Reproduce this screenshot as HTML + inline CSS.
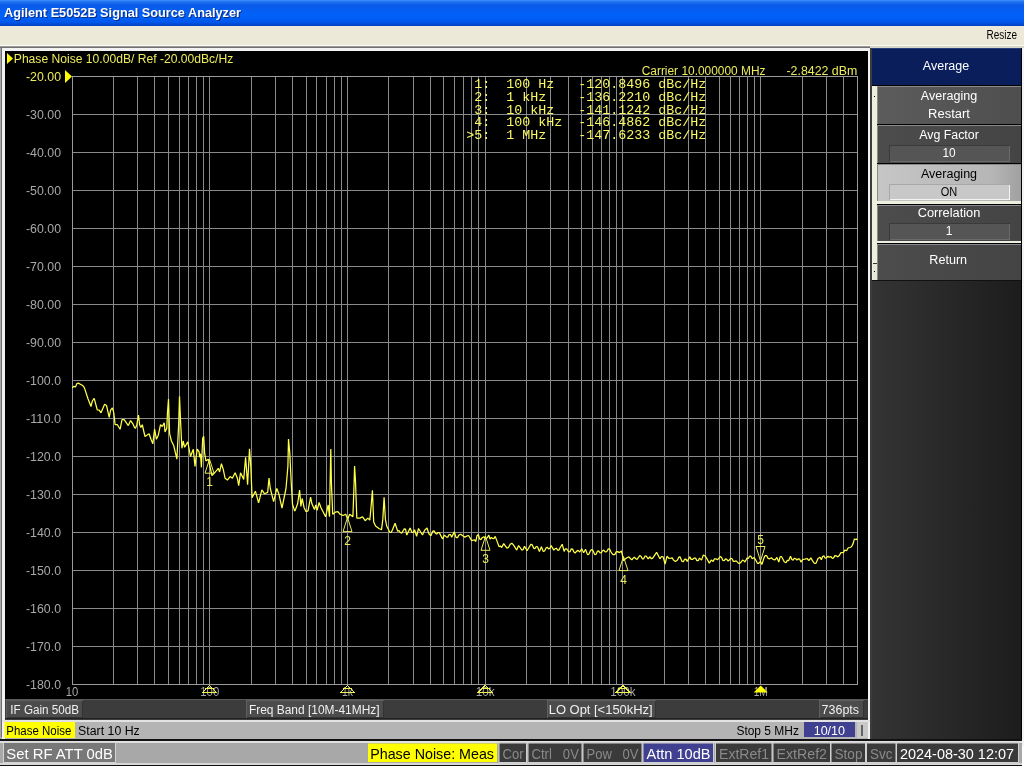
<!DOCTYPE html>
<html><head><meta charset="utf-8"><style>html,body{margin:0;padding:0;width:1024px;height:768px;overflow:hidden;background:#fff}</style></head><body>
<svg width="1024" height="768" viewBox="0 0 1024 768" style="position:absolute;left:0;top:0;will-change:transform"><defs><linearGradient id="tg" x1="0" y1="0" x2="0" y2="1"><stop offset="0" stop-color="#3d8ffa"/><stop offset="0.08" stop-color="#1f70f2"/><stop offset="0.2" stop-color="#0a5ae8"/><stop offset="0.6" stop-color="#0062fa"/><stop offset="0.85" stop-color="#0058ec"/><stop offset="1" stop-color="#0040c0"/></linearGradient><linearGradient id="pg" x1="0" y1="0" x2="1" y2="0"><stop offset="0" stop-color="#343434"/><stop offset="1" stop-color="#1c1c1c"/></linearGradient><linearGradient id="kg" x1="0" y1="0" x2="1" y2="0"><stop offset="0" stop-color="#5c5c5c"/><stop offset="1" stop-color="#4e4e4e"/></linearGradient><linearGradient id="kg2" x1="0" y1="0" x2="1" y2="0"><stop offset="0" stop-color="#4c4c4c"/><stop offset="1" stop-color="#444"/></linearGradient><linearGradient id="kl" x1="0" y1="0" x2="1" y2="0"><stop offset="0" stop-color="#c6c6c6"/><stop offset="0.8" stop-color="#b6b6b6"/><stop offset="1" stop-color="#a0a0a0"/></linearGradient></defs>
<rect x="0" y="0" width="1024" height="26" fill="url(#tg)" />
<text x="5" y="18" font-family="Liberation Sans" font-size="13" fill="#0a2a80" font-weight="bold" text-anchor="start" textLength="237" lengthAdjust="spacingAndGlyphs" >Agilent E5052B Signal Source Analyzer</text>
<text x="4" y="17" font-family="Liberation Sans" font-size="13" fill="#ffffff" font-weight="bold" text-anchor="start" textLength="237" lengthAdjust="spacingAndGlyphs" >Agilent E5052B Signal Source Analyzer</text>
<rect x="0" y="26" width="1024" height="19" fill="#ece9d8" />
<text x="986.5" y="39" font-family="Liberation Sans" font-size="12" fill="#000" font-weight="normal" text-anchor="start" textLength="30.5" lengthAdjust="spacingAndGlyphs" >Resize</text>
<rect x="0" y="45" width="1024" height="1" fill="#fbfaf2" />
<rect x="0" y="46" width="872" height="700" fill="#a8a8a8" />
<rect x="0" y="46" width="870" height="1" fill="#9a9a9a" />
<rect x="1" y="47" width="1" height="690" fill="#707070" />
<rect x="0" y="47" width="870" height="1" fill="#707070" />
<rect x="2" y="48" width="868" height="3" fill="#f2f2f2" />
<rect x="2" y="48" width="3" height="691" fill="#f2f2f2" />
<rect x="868" y="48" width="2" height="692" fill="#f2f2f2" />
<rect x="870" y="48" width="2" height="698" fill="#1a1a1a" />
<rect x="5" y="51" width="863" height="648" fill="#000" />
<rect x="72" y="76" width="786" height="1" fill="#8a8a8a" />
<rect x="72" y="114" width="786" height="1" fill="#8a8a8a" />
<rect x="72" y="152" width="786" height="1" fill="#8a8a8a" />
<rect x="72" y="190" width="786" height="1" fill="#8a8a8a" />
<rect x="72" y="228" width="786" height="1" fill="#8a8a8a" />
<rect x="72" y="266" width="786" height="1" fill="#8a8a8a" />
<rect x="72" y="304" width="786" height="1" fill="#8a8a8a" />
<rect x="72" y="342" width="786" height="1" fill="#8a8a8a" />
<rect x="72" y="380" width="786" height="1" fill="#8a8a8a" />
<rect x="72" y="418" width="786" height="1" fill="#8a8a8a" />
<rect x="72" y="456" width="786" height="1" fill="#8a8a8a" />
<rect x="72" y="494" width="786" height="1" fill="#8a8a8a" />
<rect x="72" y="532" width="786" height="1" fill="#8a8a8a" />
<rect x="72" y="570" width="786" height="1" fill="#8a8a8a" />
<rect x="72" y="608" width="786" height="1" fill="#8a8a8a" />
<rect x="72" y="646" width="786" height="1" fill="#8a8a8a" />
<rect x="72" y="684" width="786" height="1" fill="#8a8a8a" />
<rect x="72" y="76" width="1" height="609" fill="#8a8a8a" />
<rect x="113" y="76" width="1" height="609" fill="#8a8a8a" />
<rect x="137" y="76" width="1" height="609" fill="#8a8a8a" />
<rect x="154" y="76" width="1" height="609" fill="#8a8a8a" />
<rect x="168" y="76" width="1" height="609" fill="#8a8a8a" />
<rect x="179" y="76" width="1" height="609" fill="#8a8a8a" />
<rect x="188" y="76" width="1" height="609" fill="#8a8a8a" />
<rect x="196" y="76" width="1" height="609" fill="#8a8a8a" />
<rect x="203" y="76" width="1" height="609" fill="#8a8a8a" />
<rect x="209" y="76" width="1" height="609" fill="#8a8a8a" />
<rect x="251" y="76" width="1" height="609" fill="#8a8a8a" />
<rect x="275" y="76" width="1" height="609" fill="#8a8a8a" />
<rect x="292" y="76" width="1" height="609" fill="#8a8a8a" />
<rect x="306" y="76" width="1" height="609" fill="#8a8a8a" />
<rect x="316" y="76" width="1" height="609" fill="#8a8a8a" />
<rect x="326" y="76" width="1" height="609" fill="#8a8a8a" />
<rect x="334" y="76" width="1" height="609" fill="#8a8a8a" />
<rect x="341" y="76" width="1" height="609" fill="#8a8a8a" />
<rect x="347" y="76" width="1" height="609" fill="#8a8a8a" />
<rect x="388" y="76" width="1" height="609" fill="#8a8a8a" />
<rect x="413" y="76" width="1" height="609" fill="#8a8a8a" />
<rect x="430" y="76" width="1" height="609" fill="#8a8a8a" />
<rect x="443" y="76" width="1" height="609" fill="#8a8a8a" />
<rect x="454" y="76" width="1" height="609" fill="#8a8a8a" />
<rect x="463" y="76" width="1" height="609" fill="#8a8a8a" />
<rect x="471" y="76" width="1" height="609" fill="#8a8a8a" />
<rect x="478" y="76" width="1" height="609" fill="#8a8a8a" />
<rect x="485" y="76" width="1" height="609" fill="#8a8a8a" />
<rect x="526" y="76" width="1" height="609" fill="#8a8a8a" />
<rect x="550" y="76" width="1" height="609" fill="#8a8a8a" />
<rect x="568" y="76" width="1" height="609" fill="#8a8a8a" />
<rect x="581" y="76" width="1" height="609" fill="#8a8a8a" />
<rect x="592" y="76" width="1" height="609" fill="#8a8a8a" />
<rect x="601" y="76" width="1" height="609" fill="#8a8a8a" />
<rect x="609" y="76" width="1" height="609" fill="#8a8a8a" />
<rect x="616" y="76" width="1" height="609" fill="#8a8a8a" />
<rect x="622" y="76" width="1" height="609" fill="#8a8a8a" />
<rect x="664" y="76" width="1" height="609" fill="#8a8a8a" />
<rect x="688" y="76" width="1" height="609" fill="#8a8a8a" />
<rect x="705" y="76" width="1" height="609" fill="#8a8a8a" />
<rect x="719" y="76" width="1" height="609" fill="#8a8a8a" />
<rect x="730" y="76" width="1" height="609" fill="#8a8a8a" />
<rect x="739" y="76" width="1" height="609" fill="#8a8a8a" />
<rect x="747" y="76" width="1" height="609" fill="#8a8a8a" />
<rect x="754" y="76" width="1" height="609" fill="#8a8a8a" />
<rect x="760" y="76" width="1" height="609" fill="#8a8a8a" />
<rect x="802" y="76" width="1" height="609" fill="#8a8a8a" />
<rect x="826" y="76" width="1" height="609" fill="#8a8a8a" />
<rect x="843" y="76" width="1" height="609" fill="#8a8a8a" />
<rect x="857" y="76" width="1" height="609" fill="#8a8a8a" />
<rect x="72" y="76" width="786" height="1" fill="#9a9a9a" />
<rect x="72" y="684" width="786" height="1" fill="#9a9a9a" />
<rect x="72" y="76" width="1" height="609" fill="#9a9a9a" />
<rect x="857" y="76" width="1" height="609" fill="#9a9a9a" />
<path d="M7 53 L13 58.5 L7 64 Z" fill="#ffff00"/>
<text x="13.8" y="63" font-family="Liberation Sans" font-size="12" fill="#ecec5c" font-weight="normal" text-anchor="start" textLength="219.5" lengthAdjust="spacingAndGlyphs" >Phase Noise 10.00dB/ Ref -20.00dBc/Hz</text>
<path d="M65 70 L72 76.5 L65 83 Z" fill="#ffff00"/>
<text x="61" y="81" font-family="Liberation Sans" font-size="12" fill="#ecec5c" font-weight="normal" text-anchor="end" textLength="35" lengthAdjust="spacingAndGlyphs" >-20.00</text>
<text x="61" y="119" font-family="Liberation Sans" font-size="12" fill="#a8a8a8" font-weight="normal" text-anchor="end" textLength="35" lengthAdjust="spacingAndGlyphs" >-30.00</text>
<text x="61" y="157" font-family="Liberation Sans" font-size="12" fill="#a8a8a8" font-weight="normal" text-anchor="end" textLength="35" lengthAdjust="spacingAndGlyphs" >-40.00</text>
<text x="61" y="195" font-family="Liberation Sans" font-size="12" fill="#a8a8a8" font-weight="normal" text-anchor="end" textLength="35" lengthAdjust="spacingAndGlyphs" >-50.00</text>
<text x="61" y="233" font-family="Liberation Sans" font-size="12" fill="#a8a8a8" font-weight="normal" text-anchor="end" textLength="35" lengthAdjust="spacingAndGlyphs" >-60.00</text>
<text x="61" y="271" font-family="Liberation Sans" font-size="12" fill="#a8a8a8" font-weight="normal" text-anchor="end" textLength="35" lengthAdjust="spacingAndGlyphs" >-70.00</text>
<text x="61" y="309" font-family="Liberation Sans" font-size="12" fill="#a8a8a8" font-weight="normal" text-anchor="end" textLength="35" lengthAdjust="spacingAndGlyphs" >-80.00</text>
<text x="61" y="347" font-family="Liberation Sans" font-size="12" fill="#a8a8a8" font-weight="normal" text-anchor="end" textLength="35" lengthAdjust="spacingAndGlyphs" >-90.00</text>
<text x="61" y="385" font-family="Liberation Sans" font-size="12" fill="#a8a8a8" font-weight="normal" text-anchor="end" textLength="35" lengthAdjust="spacingAndGlyphs" >-100.0</text>
<text x="61" y="423" font-family="Liberation Sans" font-size="12" fill="#a8a8a8" font-weight="normal" text-anchor="end" textLength="35" lengthAdjust="spacingAndGlyphs" >-110.0</text>
<text x="61" y="461" font-family="Liberation Sans" font-size="12" fill="#a8a8a8" font-weight="normal" text-anchor="end" textLength="35" lengthAdjust="spacingAndGlyphs" >-120.0</text>
<text x="61" y="499" font-family="Liberation Sans" font-size="12" fill="#a8a8a8" font-weight="normal" text-anchor="end" textLength="35" lengthAdjust="spacingAndGlyphs" >-130.0</text>
<text x="61" y="537" font-family="Liberation Sans" font-size="12" fill="#a8a8a8" font-weight="normal" text-anchor="end" textLength="35" lengthAdjust="spacingAndGlyphs" >-140.0</text>
<text x="61" y="575" font-family="Liberation Sans" font-size="12" fill="#a8a8a8" font-weight="normal" text-anchor="end" textLength="35" lengthAdjust="spacingAndGlyphs" >-150.0</text>
<text x="61" y="613" font-family="Liberation Sans" font-size="12" fill="#a8a8a8" font-weight="normal" text-anchor="end" textLength="35" lengthAdjust="spacingAndGlyphs" >-160.0</text>
<text x="61" y="651" font-family="Liberation Sans" font-size="12" fill="#a8a8a8" font-weight="normal" text-anchor="end" textLength="35" lengthAdjust="spacingAndGlyphs" >-170.0</text>
<text x="61" y="689" font-family="Liberation Sans" font-size="12" fill="#a8a8a8" font-weight="normal" text-anchor="end" textLength="35" lengthAdjust="spacingAndGlyphs" >-180.0</text>
<text x="72.0" y="696" font-family="Liberation Sans" font-size="12" fill="#a8a8a8" font-weight="normal" text-anchor="middle" textLength="12.5" lengthAdjust="spacingAndGlyphs" >10</text>
<text x="209.74418875739627" y="696" font-family="Liberation Sans" font-size="12" fill="#a8a8a8" font-weight="normal" text-anchor="middle" textLength="19" lengthAdjust="spacingAndGlyphs" >100</text>
<text x="347.48837751479255" y="696" font-family="Liberation Sans" font-size="12" fill="#a8a8a8" font-weight="normal" text-anchor="middle" textLength="11" lengthAdjust="spacingAndGlyphs" >1k</text>
<text x="485.2325662721888" y="696" font-family="Liberation Sans" font-size="12" fill="#a8a8a8" font-weight="normal" text-anchor="middle" textLength="19" lengthAdjust="spacingAndGlyphs" >10k</text>
<text x="622.9767550295851" y="696" font-family="Liberation Sans" font-size="12" fill="#a8a8a8" font-weight="normal" text-anchor="middle" textLength="25.5" lengthAdjust="spacingAndGlyphs" >100k</text>
<text x="760.7209437869814" y="696" font-family="Liberation Sans" font-size="12" fill="#a8a8a8" font-weight="normal" text-anchor="middle" textLength="14" lengthAdjust="spacingAndGlyphs" >1M</text>
<text x="641.7" y="75" font-family="Liberation Sans" font-size="12" fill="#ecec5c" font-weight="normal" text-anchor="start" textLength="123.8" lengthAdjust="spacingAndGlyphs" >Carrier 10.000000 MHz</text>
<text x="786.5" y="75" font-family="Liberation Sans" font-size="12" fill="#ecec5c" font-weight="normal" text-anchor="start" textLength="70.8" lengthAdjust="spacingAndGlyphs" >-2.8422 dBm</text>
<text x="466.3" y="88.0" font-family="Liberation Mono" font-size="12" fill="#fafa64" xml:space="preserve" textLength="240" lengthAdjust="spacingAndGlyphs"> 1:  100 Hz   -120.8496 dBc/Hz</text>
<text x="466.3" y="100.8" font-family="Liberation Mono" font-size="12" fill="#fafa64" xml:space="preserve" textLength="240" lengthAdjust="spacingAndGlyphs"> 2:  1 kHz    -136.2210 dBc/Hz</text>
<text x="466.3" y="113.6" font-family="Liberation Mono" font-size="12" fill="#fafa64" xml:space="preserve" textLength="240" lengthAdjust="spacingAndGlyphs"> 3:  10 kHz   -141.1242 dBc/Hz</text>
<text x="466.3" y="126.4" font-family="Liberation Mono" font-size="12" fill="#fafa64" xml:space="preserve" textLength="240" lengthAdjust="spacingAndGlyphs"> 4:  100 kHz  -146.4862 dBc/Hz</text>
<text x="466.3" y="139.2" font-family="Liberation Mono" font-size="12" fill="#fafa64" xml:space="preserve" textLength="240" lengthAdjust="spacingAndGlyphs">&gt;5:  1 MHz    -147.6233 dBc/Hz</text>
<polyline points="72.3,388.2 73.6,386.4 75.5,386.9 76.8,383.7 78.7,383.2 80.0,384.1 81.9,385.0 83.7,386.4 85.0,389.6 87.8,398.3 91.0,406.5 92.3,401.0 94.2,398.3 97.3,410.0 99.2,410.1 101.0,412.8 104.6,404.2 106.5,405.5 109.2,417.4 110.6,410.1 112.4,407.8 113.8,412.8 115.1,424.7 117.4,424.7 120.1,429.3 122.0,419.7 124.2,419.7 128.3,425.6 130.6,420.6 132.9,423.8 134.5,427.5 135.5,428.3 136.8,424.7 138.5,415.1 139.6,424.7 140.9,427.4 142.3,424.7 143.7,431.0 145.0,436.5 146.9,435.2 149.1,433.8 151.0,439.3 152.8,443.8 154.6,429.2 156.4,439.3 158.2,435.6 160.5,424.7 162.3,426.5 164.2,422.8 165.0,431.9 166.8,428.2 167.4,413.7 168.5,399.1 169.6,433.7 171.4,441.0 173.7,445.5 176.9,459.2 178.7,423.6 179.5,396.4 180.6,421.9 181.9,448.3 183.2,441.0 184.6,447.3 187.8,441.9 190.5,456.5 193.3,449.2 195.0,466.5 195.9,458.3 197.3,449.1 199.1,451.9 199.6,457.3 200.5,453.7 201.4,467.4 202.7,438.2 203.7,436.4 204.6,452.8 205.9,461.0 208.2,459.2 210.0,466.5 211.9,475.6 213.7,473.8 216.9,470.1 218.2,468.3 219.6,471.9 221.4,463.7 223.2,469.2 225.1,478.3 227.4,480.1 230.1,476.5 232.4,478.3 235.1,472.8 237.4,478.3 238.7,485.6 240.5,472.8 242.8,477.4 243.7,479.4 245.6,457.3 247.6,484.6 249.5,448.9 250.8,466.4 252.1,497.7 255.4,491.2 258.6,502.9 261.9,489.8 264.5,493.8 267.7,492.4 269.0,478.1 270.3,488.5 273.6,501.6 276.8,488.5 278.8,493.8 282.0,508.0 286.0,488.5 287.9,466.4 288.5,439.1 289.8,453.4 291.2,482.0 292.5,504.2 294.5,510.5 295.0,510.9 297.6,503.8 299.6,490.1 300.9,506.4 302.2,498.5 304.1,507.7 306.1,511.6 308.0,510.9 310.6,497.2 311.9,503.8 314.5,509.6 315.8,505.0 317.1,510.3 319.1,502.5 321.0,507.7 325.6,516.8 328.2,505.0 329.5,516.8 330.1,482.9 330.8,449.1 331.4,482.9 332.7,514.2 335.3,512.2 337.9,511.6 339.9,514.2 343.1,515.5 345.7,514.2 347.7,519.4 349.6,514.2 352.9,516.8 354.2,480.3 354.6,466.0 355.5,481.6 356.8,518.1 358.8,518.1 360.0,518.1 362.6,516.8 365.2,520.7 367.8,518.1 369.8,520.1 371.1,506.4 372.4,490.2 373.7,522.0 375.6,526.0 378.9,528.5 381.5,529.8 382.8,519.4 384.1,497.3 385.4,519.4 386.7,526.0 389.9,532.5 391.2,532.4 392.5,529.8 395.1,523.3 397.7,531.2 399.0,530.6 400.3,532.5 401.6,533.1 402.9,531.2 404.2,528.9 405.5,529.2 406.8,535.0 410.1,527.9 412.0,532.5 413.3,532.4 414.6,529.8 416.6,536.4 418.5,528.5 422.5,535.0 424.5,530.5 425.0,529.9 427.0,528.0 428.9,533.8 430.9,535.8 432.8,531.2 434.1,530.9 435.4,533.2 436.7,534.1 438.0,532.5 439.3,532.5 440.6,535.1 442.6,539.0 444.5,535.1 446.5,537.1 447.8,537.1 449.1,534.5 450.4,534.5 451.7,537.1 454.3,531.9 456.2,537.7 457.5,537.7 458.8,535.1 460.8,534.2 462.7,535.8 465.0,537.1 467.3,535.8 468.6,535.5 469.9,537.7 471.5,540.3 473.1,540.3 474.4,539.7 475.7,541.6 477.0,535.8 478.3,534.5 479.6,539.0 480.9,539.6 482.2,537.7 483.9,536.8 485.5,538.4 487.1,538.0 488.8,535.1 490.0,539.0 491.3,537.4 492.6,538.4 493.9,538.7 495.2,536.4 497.2,541.6 499.1,546.8 500.4,545.9 501.7,547.5 503.7,543.6 506.9,548.1 508.5,547.5 510.2,544.2 511.8,543.2 513.4,544.9 516.7,550.1 518.6,545.5 521.9,550.1 523.2,549.5 524.5,546.2 527.1,550.7 529.7,546.2 531.0,544.2 532.3,544.9 533.6,548.1 534.9,548.8 536.2,546.5 537.5,546.8 539.4,551.4 541.4,546.8 543.3,551.4 544.6,551.0 546.0,548.1 547.2,547.2 548.5,548.8 549.8,548.4 551.1,545.5 553.8,550.1 555.0,548.8 556.3,548.2 557.6,550.1 558.9,550.1 560.2,547.5 562.2,544.2 564.1,551.4 565.4,548.8 566.7,548.8 568.7,552.0 570.0,551.7 571.3,548.8 572.6,549.1 573.9,552.0 575.2,553.0 576.5,551.4 578.1,550.4 579.7,552.0 581.7,548.8 583.6,552.7 585.6,549.4 587.5,554.6 588.8,554.3 590.1,551.4 591.4,549.5 592.7,550.1 594.7,554.6 596.0,554.3 597.3,551.4 598.6,550.8 599.9,552.7 601.2,553.0 602.5,550.7 603.8,550.1 605.1,552.0 606.7,551.7 608.3,548.8 609.6,549.1 611.0,552.0 612.9,554.6 614.8,554.6 616.2,551.8 617.6,551.6 619.5,552.6 621.5,551.0 622.8,556.8 623.5,560.7 625.4,558.8 627.4,557.5 629.0,556.9 630.6,558.8 631.9,559.8 633.2,558.1 634.5,557.2 635.8,558.8 637.1,559.4 638.4,557.5 639.7,555.6 641.0,556.2 642.3,558.8 643.6,558.8 644.9,556.2 646.2,556.2 648.2,558.8 650.1,556.8 651.4,558.8 652.7,558.1 656.6,552.3 659.9,558.8 661.5,556.5 663.1,556.8 665.1,564.0 667.0,556.2 669.0,558.5 671.0,558.1 672.2,557.8 673.5,560.1 675.5,561.4 677.5,560.1 678.8,557.2 680.0,556.8 682.0,561.4 683.3,561.7 684.6,559.4 685.9,559.1 687.2,561.4 689.8,556.8 691.1,559.4 692.4,559.4 694.3,558.1 695.6,558.1 696.9,560.7 698.2,560.7 699.5,558.1 701.5,560.1 703.4,554.9 705.4,556.2 707.3,559.4 709.3,563.3 711.2,560.1 713.2,561.4 714.5,558.8 715.8,558.8 717.4,559.8 719.0,558.1 720.3,556.5 721.6,557.5 722.9,560.4 724.2,560.7 725.5,558.8 726.8,559.4 728.1,561.0 729.4,560.1 730.7,558.2 732.0,558.8 733.3,561.4 734.6,561.4 736.2,560.8 737.9,562.7 739.5,563.6 741.2,562.0 742.5,560.1 743.8,560.7 745.0,562.0 747.0,558.1 748.3,558.5 749.6,556.2 750.9,556.2 752.2,558.8 754.1,557.5 756.1,560.7 757.4,563.3 758.7,563.3 760.6,561.4 761.9,564.6 763.9,558.1 765.2,555.5 766.5,555.5 768.1,558.4 769.7,558.8 771.4,557.8 773.0,559.4 775.0,559.8 776.9,557.5 778.8,562.0 780.1,556.8 781.4,556.5 782.7,558.8 784.4,562.0 786.0,562.7 787.3,560.4 788.6,560.7 790.5,556.2 791.8,559.5 793.1,560.1 794.4,558.2 795.7,558.8 797.0,560.1 798.3,558.8 799.6,559.1 800.9,562.0 802.9,559.4 805.0,559.2 807.0,558.5 808.9,560.5 810.9,557.9 812.8,561.2 814.5,563.5 816.1,563.1 818.0,558.5 820.0,557.2 821.3,559.8 822.6,556.5 823.9,555.9 825.2,558.2 826.5,557.9 827.8,556.2 829.1,557.2 831.0,556.6 832.3,558.5 833.6,557.9 834.9,555.6 836.2,555.9 837.9,556.9 839.5,555.3 840.8,552.7 842.1,552.7 843.4,552.7 844.7,550.1 846.6,550.7 848.2,547.8 849.9,547.5 851.5,546.8 853.1,543.6 854.4,539.0 856.4,539.7 857.0,538.4" fill="none" stroke="#ffff48" stroke-width="1.25" stroke-linejoin="bevel"/>
<path d="M209.5 459.2 L205.0 473.2 L214.0 473.2 Z" fill="none" stroke="#ecec5c" stroke-width="1"/>
<text x="209.5" y="486.22848" font-family="Liberation Sans" font-size="12" fill="#ecec5c" font-weight="normal" text-anchor="middle" >1</text>
<path d="M347.5 517.6 L343.0 531.6 L352.0 531.6 Z" fill="none" stroke="#ecec5c" stroke-width="1"/>
<text x="347.5" y="544.6397999999999" font-family="Liberation Sans" font-size="12" fill="#ecec5c" font-weight="normal" text-anchor="middle" >2</text>
<path d="M485.5 536.3 L481.0 550.3 L490.0 550.3 Z" fill="none" stroke="#ecec5c" stroke-width="1"/>
<text x="485.5" y="563.27196" font-family="Liberation Sans" font-size="12" fill="#ecec5c" font-weight="normal" text-anchor="middle" >3</text>
<path d="M623.5 556.6 L619.0 570.6 L628.0 570.6 Z" fill="none" stroke="#ecec5c" stroke-width="1"/>
<text x="623.5" y="583.6475599999999" font-family="Liberation Sans" font-size="12" fill="#ecec5c" font-weight="normal" text-anchor="middle" >4</text>
<path d="M760.5 561.0 L756 546.5 L765 546.5 Z" fill="none" stroke="#ecec5c" stroke-width="1"/>
<text x="760.5" y="543.96854" font-family="Liberation Sans" font-size="12" fill="#ecec5c" font-weight="normal" text-anchor="middle" >5</text>
<path d="M209.7 685.5 L203.2 692 L216.2 692 Z" fill="none" stroke="#f0f050" stroke-width="1" shape-rendering="crispEdges"/>
<line x1="205.24418875739627" y1="688.5" x2="214.24418875739627" y2="688.5" stroke="#f0f050" shape-rendering="crispEdges"/>
<path d="M347.5 685.5 L341.0 692 L354.0 692 Z" fill="none" stroke="#f0f050" stroke-width="1" shape-rendering="crispEdges"/>
<line x1="342.98837751479255" y1="688.5" x2="351.98837751479255" y2="688.5" stroke="#f0f050" shape-rendering="crispEdges"/>
<path d="M485.2 685.5 L478.7 692 L491.7 692 Z" fill="none" stroke="#f0f050" stroke-width="1" shape-rendering="crispEdges"/>
<line x1="480.7325662721888" y1="688.5" x2="489.7325662721888" y2="688.5" stroke="#f0f050" shape-rendering="crispEdges"/>
<path d="M623.0 685.5 L616.5 692 L629.5 692 Z" fill="none" stroke="#f0f050" stroke-width="1" shape-rendering="crispEdges"/>
<line x1="618.4767550295851" y1="688.5" x2="627.4767550295851" y2="688.5" stroke="#f0f050" shape-rendering="crispEdges"/>
<path d="M760.7 685.5 L753.7 692.5 L767.7 692.5 Z" fill="#ffff00"/>
<rect x="5" y="699" width="863" height="21" fill="#3c3c3c" />
<rect x="5" y="699" width="863" height="1" fill="#5a5a5a" />
<rect x="6" y="700" width="77" height="18" fill="#5e5e5e" />
<rect x="7" y="701" width="76" height="17" fill="#333" />
<rect x="7" y="701" width="75" height="16" fill="#4c4c4c" />
<text x="10.3" y="714" font-family="Liberation Sans" font-size="12" fill="#f0f0f0" font-weight="normal" text-anchor="start" textLength="68.8" lengthAdjust="spacingAndGlyphs" >IF Gain 50dB</text>
<rect x="246" y="700" width="138" height="18" fill="#5e5e5e" />
<rect x="247" y="701" width="137" height="17" fill="#333" />
<rect x="247" y="701" width="136" height="16" fill="#4c4c4c" />
<text x="248.9" y="714" font-family="Liberation Sans" font-size="12" fill="#f0f0f0" font-weight="normal" text-anchor="start" textLength="130.7" lengthAdjust="spacingAndGlyphs" >Freq Band [10M-41MHz]</text>
<rect x="547" y="700" width="109" height="18" fill="#5e5e5e" />
<rect x="548" y="701" width="108" height="17" fill="#333" />
<rect x="548" y="701" width="107" height="16" fill="#4c4c4c" />
<text x="548.7" y="714" font-family="Liberation Sans" font-size="12" fill="#f0f0f0" font-weight="normal" text-anchor="start" textLength="104" lengthAdjust="spacingAndGlyphs" >LO Opt [&lt;150kHz]</text>
<rect x="819" y="700" width="45" height="18" fill="#5e5e5e" />
<rect x="820" y="701" width="44" height="17" fill="#333" />
<rect x="820" y="701" width="43" height="16" fill="#4c4c4c" />
<text x="821.6" y="714" font-family="Liberation Sans" font-size="12" fill="#f0f0f0" font-weight="normal" text-anchor="start" textLength="37.4" lengthAdjust="spacingAndGlyphs" >736pts</text>
<rect x="5" y="718" width="863" height="1" fill="#222" />
<rect x="2" y="720" width="868" height="2" fill="#e2e2e2" />
<rect x="5" y="722" width="863" height="17" fill="#b4b4b4" />
<rect x="4.5" y="722" width="70.5" height="16" fill="#ffff00" />
<text x="6.3" y="735" font-family="Liberation Sans" font-size="12.5" fill="#000" font-weight="normal" text-anchor="start" textLength="65" lengthAdjust="spacingAndGlyphs" >Phase Noise</text>
<text x="78.1" y="735" font-family="Liberation Sans" font-size="12.5" fill="#000" font-weight="normal" text-anchor="start" textLength="61.7" lengthAdjust="spacingAndGlyphs" >Start 10 Hz</text>
<text x="736.4" y="735" font-family="Liberation Sans" font-size="12.5" fill="#000" font-weight="normal" text-anchor="start" textLength="62.6" lengthAdjust="spacingAndGlyphs" >Stop 5 MHz</text>
<rect x="804" y="722" width="51" height="15" fill="#404090" />
<text x="813.7" y="735" font-family="Liberation Sans" font-size="12.5" fill="#fff" font-weight="normal" text-anchor="start" textLength="31.3" lengthAdjust="spacingAndGlyphs" >10/10</text>
<rect x="857" y="722" width="11" height="16" fill="#c8c8c8" />
<rect x="861.5" y="725" width="1" height="11" fill="#000" />
<rect x="872" y="48" width="152" height="698" fill="url(#pg)" />
<rect x="870" y="48" width="2" height="698" fill="#3c3c3c" />
<rect x="870" y="46" width="154" height="2" fill="#d8d6c8" />
<rect x="872" y="48" width="149" height="37" fill="#0a1e5c" />
<rect x="872" y="48" width="149" height="1" fill="#2a3e7c" />
<rect x="872" y="85" width="149" height="1" fill="#000" />
<text x="946" y="70" font-family="Liberation Sans" font-size="12" fill="#fff" font-weight="normal" text-anchor="middle" textLength="46.4" lengthAdjust="spacingAndGlyphs" >Average</text>
<rect x="872" y="86" width="5" height="177" fill="#efefe0" />
<rect x="872" y="263" width="1" height="17" fill="#efefe0" />
<rect x="873" y="264" width="4" height="16" fill="#e8e8d8" />
<rect x="874" y="96" width="1" height="1" fill="#000" />
<rect x="874" y="271" width="1" height="1" fill="#000" />
<rect x="1021" y="48" width="3" height="698" fill="#f4f4f4" />
<rect x="1021" y="48" width="1" height="692" fill="#000" />
<rect x="877" y="86" width="144" height="38" fill="url(#kg)" />
<rect x="877" y="86" width="144" height="1" fill="#8a8a8a" />
<rect x="877" y="86" width="1" height="38" fill="#8a8a8a" />
<rect x="877" y="124" width="144" height="1" fill="#000" />
<text x="949" y="100.3" font-family="Liberation Sans" font-size="12" fill="#fff" font-weight="normal" text-anchor="middle" textLength="56.3" lengthAdjust="spacingAndGlyphs" >Averaging</text>
<text x="949" y="118" font-family="Liberation Sans" font-size="12" fill="#fff" font-weight="normal" text-anchor="middle" textLength="41.8" lengthAdjust="spacingAndGlyphs" >Restart</text>
<rect x="877" y="125" width="144" height="38" fill="url(#kg2)" />
<rect x="877" y="125" width="144" height="1" fill="#8a8a8a" />
<rect x="877" y="125" width="1" height="38" fill="#8a8a8a" />
<rect x="877" y="163" width="144" height="1" fill="#000" />
<text x="949" y="139" font-family="Liberation Sans" font-size="12" fill="#fff" font-weight="normal" text-anchor="middle" textLength="59.7" lengthAdjust="spacingAndGlyphs" >Avg Factor</text>
<rect x="889" y="145" width="121" height="17" fill="#3a3a3a" />
<rect x="890" y="146" width="120" height="16" fill="#6a6a6a" />
<rect x="890" y="146" width="119" height="15" fill="#555" />
<text x="949" y="157" font-family="Liberation Sans" font-size="12" fill="#fff" font-weight="normal" text-anchor="middle" textLength="13.2" lengthAdjust="spacingAndGlyphs" >10</text>
<rect x="877" y="164" width="144" height="37" fill="url(#kl)" />
<rect x="877" y="164" width="144" height="1" fill="#8a8a8a" />
<rect x="877" y="164" width="1" height="37" fill="#8a8a8a" />
<rect x="877" y="201" width="144" height="3" fill="#efefe0" />
<rect x="877" y="204" width="144" height="1" fill="#000" />
<text x="949" y="178" font-family="Liberation Sans" font-size="12" fill="#000" font-weight="normal" text-anchor="middle" textLength="56.2" lengthAdjust="spacingAndGlyphs" >Averaging</text>
<rect x="889" y="184" width="121" height="16" fill="#a8a8a8" />
<rect x="890" y="185" width="120" height="15" fill="#f4f4f4" />
<rect x="890" y="185" width="119" height="14" fill="#c8c8c8" />
<text x="949" y="196" font-family="Liberation Sans" font-size="12" fill="#000" font-weight="normal" text-anchor="middle" textLength="16.5" lengthAdjust="spacingAndGlyphs" >ON</text>
<rect x="877" y="205" width="144" height="36" fill="url(#kg2)" />
<rect x="877" y="205" width="144" height="1" fill="#8a8a8a" />
<rect x="877" y="205" width="1" height="36" fill="#8a8a8a" />
<rect x="877" y="241" width="144" height="2" fill="#efefe0" />
<rect x="877" y="243" width="144" height="1" fill="#000" />
<text x="949" y="217" font-family="Liberation Sans" font-size="12" fill="#fff" font-weight="normal" text-anchor="middle" textLength="62.5" lengthAdjust="spacingAndGlyphs" >Correlation</text>
<rect x="889" y="223" width="121" height="17" fill="#3a3a3a" />
<rect x="890" y="224" width="120" height="16" fill="#6a6a6a" />
<rect x="890" y="224" width="119" height="15" fill="#555" />
<text x="949" y="235" font-family="Liberation Sans" font-size="12" fill="#fff" font-weight="normal" text-anchor="middle" >1</text>
<rect x="877" y="244" width="144" height="36" fill="url(#kg2)" />
<rect x="877" y="244" width="144" height="1" fill="#8a8a8a" />
<rect x="877" y="244" width="1" height="36" fill="#8a8a8a" />
<rect x="872" y="280" width="149" height="1" fill="#111" />
<text x="948.2" y="264" font-family="Liberation Sans" font-size="12" fill="#fff" font-weight="normal" text-anchor="middle" textLength="37.8" lengthAdjust="spacingAndGlyphs" >Return</text>
<rect x="0" y="739" width="1022" height="2" fill="#111" />
<rect x="0" y="741" width="1022" height="24" fill="#a8a8a8" />
<rect x="0" y="741" width="1022" height="2" fill="#e0e0e0" />
<rect x="0" y="763" width="1022" height="2" fill="#d8d8d8" />
<rect x="0" y="765" width="1022" height="1" fill="#111" />
<rect x="0" y="766" width="1024" height="2" fill="#fff" />
<rect x="3" y="742" width="113" height="21" fill="#d4d4d4" />
<rect x="4" y="743" width="111" height="19" fill="#787878" />
<text x="6.3" y="759" font-family="Liberation Sans" font-size="15" fill="#fff" font-weight="normal" text-anchor="start" textLength="106.7" lengthAdjust="spacingAndGlyphs" >Set RF ATT 0dB</text>
<rect x="368" y="743.5" width="129" height="18.5" fill="#ffff00" />
<text x="370.2" y="759" font-family="Liberation Sans" font-size="15" fill="#000" font-weight="normal" text-anchor="start" textLength="123.8" lengthAdjust="spacingAndGlyphs" >Phase Noise: Meas</text>
<rect x="498.5" y="742" width="28.5" height="22" fill="#d0d0d0" />
<rect x="499.5" y="743.5" width="26.5" height="18.5" fill="#3a3a3a" />
<text x="502.5" y="759" font-family="Liberation Sans" font-size="15" fill="#8a8a8a" font-weight="normal" text-anchor="start" textLength="21" lengthAdjust="spacingAndGlyphs" xml:space="preserve">Cor</text>
<rect x="527.5" y="742" width="55.0" height="22" fill="#d0d0d0" />
<rect x="528.5" y="743.5" width="53.0" height="18.5" fill="#3a3a3a" />
<text x="531.5" y="759" font-family="Liberation Sans" font-size="15" fill="#8a8a8a" font-weight="normal" text-anchor="start" textLength="47.4" lengthAdjust="spacingAndGlyphs" xml:space="preserve">Ctrl   0V</text>
<rect x="582.5" y="742" width="60.0" height="22" fill="#d0d0d0" />
<rect x="583.5" y="743.5" width="58.0" height="18.5" fill="#3a3a3a" />
<text x="586.5" y="759" font-family="Liberation Sans" font-size="15" fill="#8a8a8a" font-weight="normal" text-anchor="start" textLength="52" lengthAdjust="spacingAndGlyphs" xml:space="preserve">Pow   0V</text>
<rect x="642.5" y="742" width="71.5" height="22" fill="#d0d0d0" />
<rect x="643.5" y="743.5" width="69.5" height="18.5" fill="#404090" />
<text x="646.5" y="759" font-family="Liberation Sans" font-size="15" fill="#fff" font-weight="normal" text-anchor="start" textLength="64" lengthAdjust="spacingAndGlyphs" xml:space="preserve">Attn 10dB</text>
<rect x="715" y="742" width="57.5" height="22" fill="#d0d0d0" />
<rect x="716" y="743.5" width="55.5" height="18.5" fill="#3a3a3a" />
<text x="719" y="759" font-family="Liberation Sans" font-size="15" fill="#8a8a8a" font-weight="normal" text-anchor="start" textLength="50" lengthAdjust="spacingAndGlyphs" xml:space="preserve">ExtRef1</text>
<rect x="772.5" y="742" width="58.5" height="22" fill="#d0d0d0" />
<rect x="773.5" y="743.5" width="56.5" height="18.5" fill="#3a3a3a" />
<text x="776.5" y="759" font-family="Liberation Sans" font-size="15" fill="#8a8a8a" font-weight="normal" text-anchor="start" textLength="50.5" lengthAdjust="spacingAndGlyphs" xml:space="preserve">ExtRef2</text>
<rect x="830.5" y="742" width="35.5" height="22" fill="#d0d0d0" />
<rect x="831.5" y="743.5" width="33.5" height="18.5" fill="#3a3a3a" />
<text x="834.5" y="759" font-family="Liberation Sans" font-size="15" fill="#8a8a8a" font-weight="normal" text-anchor="start" textLength="28" lengthAdjust="spacingAndGlyphs" xml:space="preserve">Stop</text>
<rect x="866" y="742" width="30.5" height="22" fill="#d0d0d0" />
<rect x="867" y="743.5" width="28.5" height="18.5" fill="#3a3a3a" />
<text x="870" y="759" font-family="Liberation Sans" font-size="15" fill="#8a8a8a" font-weight="normal" text-anchor="start" textLength="22.5" lengthAdjust="spacingAndGlyphs" xml:space="preserve">Svc</text>
<rect x="896" y="742" width="123" height="22" fill="#d0d0d0" />
<rect x="897" y="743.5" width="121" height="18.5" fill="#3a3a3a" />
<text x="900" y="759" font-family="Liberation Sans" font-size="15" fill="#fff" font-weight="normal" text-anchor="start" textLength="114" lengthAdjust="spacingAndGlyphs" xml:space="preserve">2024-08-30 12:07</text></svg>
</body></html>
